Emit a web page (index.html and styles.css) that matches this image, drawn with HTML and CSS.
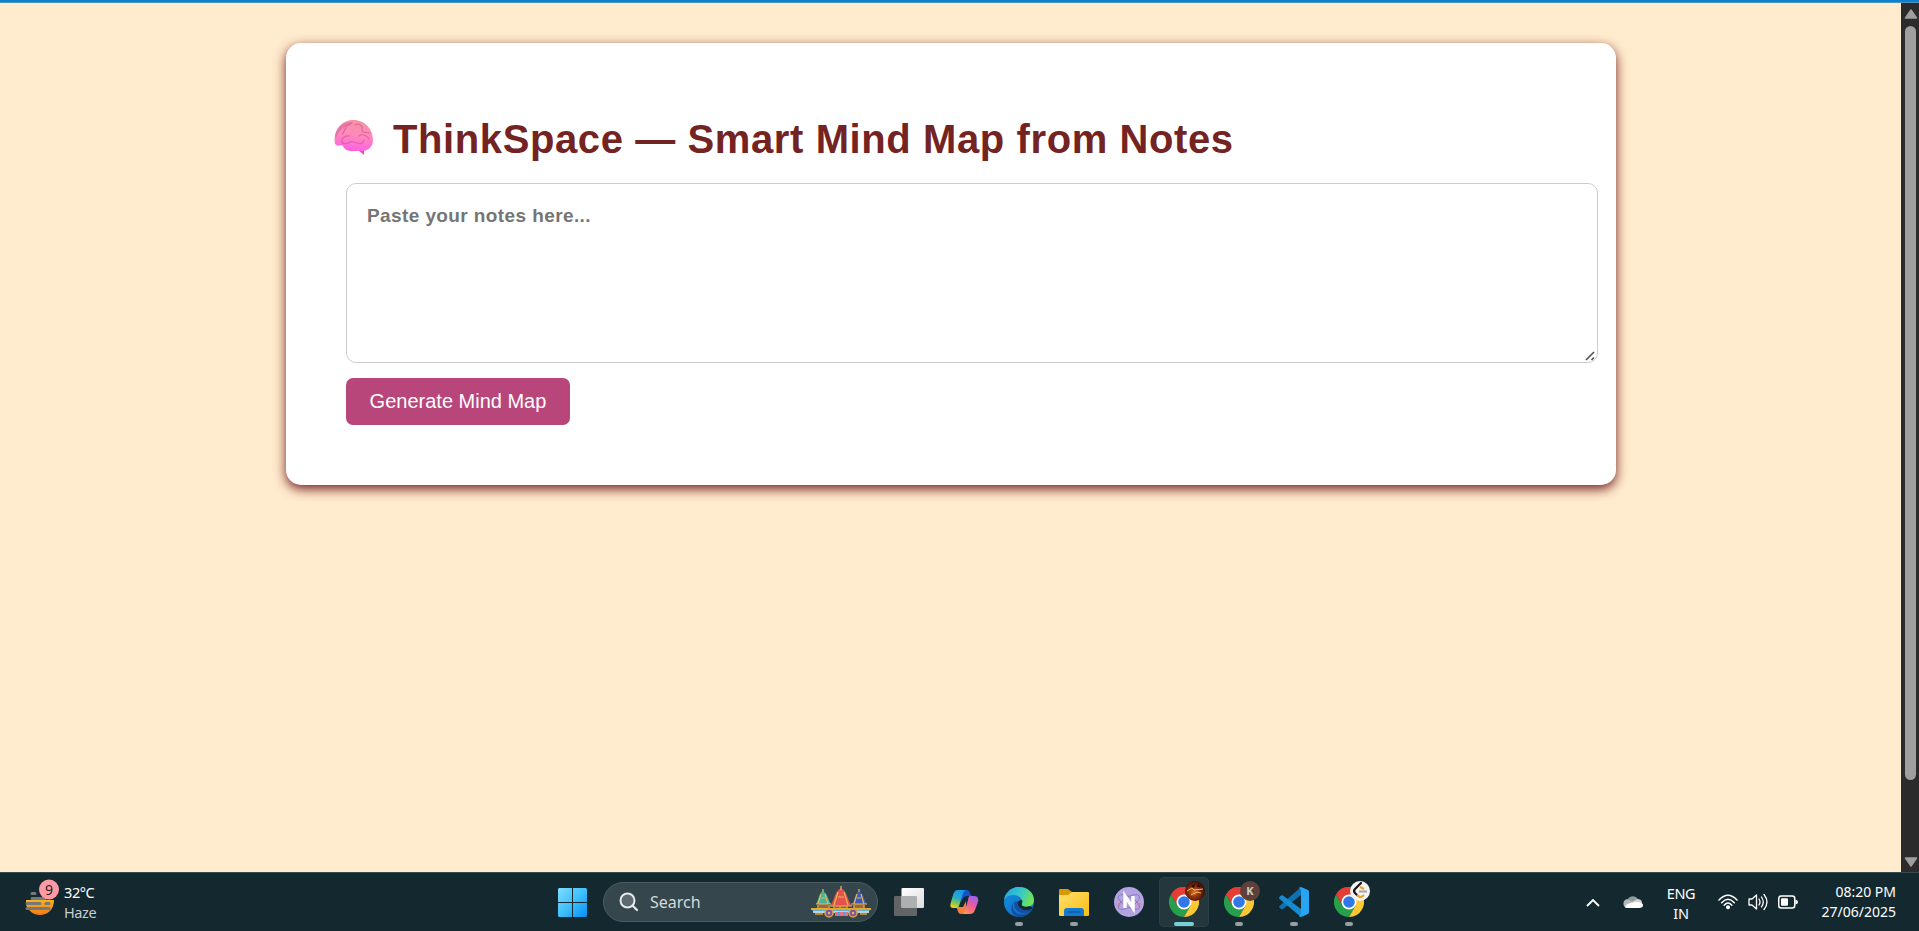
FILE: index.html
```html
<!DOCTYPE html>
<html lang="en">
<head>
<meta charset="utf-8">
<title>ThinkSpace</title>
<link rel="stylesheet" href="styles.css">
</head>
<body>
<svg width="0" height="0" class="defs" aria-hidden="true">
  <defs>
    <symbol id="chrome" viewBox="0 0 30 30">
      <path d="M15 15 2 7.500A15 15 0 0 1 28 7.500Z" fill="#e43e35"/>
      <path d="M2 7.500A15 15 0 0 0 15 30L21.500 18.700 15 15 8.500 18.700Z" fill="#27a04b"/>
      <path d="M28 7.500A15 15 0 0 1 15 30L21.500 18.700V7.500Z" fill="#fcc934"/>
      <path d="M15 7.500H28A15 15 0 0 0 2 7.500L8.500 18.700Z" fill="#e43e35"/>
      <circle cx="15" cy="15" r="7.500" fill="#fff"/><circle cx="15" cy="15" r="5.800" fill="#2f78ea"/>
    </symbol>
  </defs>
</svg>
<div class="topline"></div>
<div class="viewport">
  <main class="page">
    <section class="card">
      <h1 class="title">
        <svg class="brain" width="39" height="36" viewBox="0 0 39 36">
          <defs>
            <linearGradient id="bg" x1=".5" y1="0" x2=".35" y2="1"><stop offset="0" stop-color="#f695a0"/><stop offset=".5" stop-color="#ff88bd"/><stop offset="1" stop-color="#ff5fe5"/></linearGradient>
            <linearGradient id="bl" x1="0" y1="0" x2="1" y2="1"><stop offset="0" stop-color="#d57192"/><stop offset="1" stop-color="#f06bbb"/></linearGradient>
          </defs>
          <path d="M24 30 30 35V28Z" fill="#fb3fc6"/>
          <path d="M1 24C-1 12 6 0 19 0 32 0 39 10 39 20 39 27 34 31 28 31H17C12 31 10 28 8 25 5 26 3 26 1 24Z" fill="url(#bg)"/>
          <path d="M1 18C1 9 8 2 18 2 15 5 9 7 6 11 3 14 4 17 1 18Z" fill="url(#bl)" opacity=".8"/>
          <g fill="none" stroke="#d65aa2" stroke-width="1.200" stroke-linecap="round">
            <path d="M9 24C5 19 11 15 16 16M9 23C14 26 15 20 20 22S29 25 30 20M12 8C9 10 11 13 8 14M21 5C27 2 29 8 28 10S33 13 36 13M25 16C29 13 33 16 35 19M18 3C16 5 13 5 12 7" opacity=".75"/>
          </g>
        </svg>
        <span class="title-text">ThinkSpace — Smart Mind Map from Notes</span>
      </h1>
      <div class="notes">
        <span class="placeholder">Paste your notes here...</span>
        <svg class="grip" width="10" height="10" viewBox="0 0 10 10"><path d="M1 9 9 1M6.500 9 9 6.500" stroke="#555" stroke-width="1.700"/></svg>
      </div>
      <button class="generate">Generate Mind Map</button>
    </section>
  </main>
  <div class="scrollbar">
    <svg width="14" height="10" viewBox="0 0 14 10"><path d="M7 1 12.500 9H1.500Z" fill="#9f9f9f" stroke="#9f9f9f" stroke-width="1.500" stroke-linejoin="round"/></svg>
    <div class="thumb"></div>
    <svg class="down" width="14" height="10" viewBox="0 0 14 10"><path d="M1.500 1H12.500L7 9Z" fill="#9f9f9f" stroke="#9f9f9f" stroke-width="1.500" stroke-linejoin="round"/></svg>
  </div>
</div>
<footer class="taskbar">
  <div class="weather">
    <svg width="34" height="37" viewBox="0 0 34 37">
      <defs><linearGradient id="sun" x1="0" y1="0" x2="0" y2="1"><stop offset="0" stop-color="#f5b51f"/><stop offset="1" stop-color="#f07a18"/></linearGradient></defs>
      <path d="M1 21H29C29 31 22 36 15 36S3 31 1 26Z" fill="url(#sun)"/>
      <g stroke="#75777a" stroke-width="3" stroke-linecap="round"><path d="M7 14.500H10M7 19.500H20M2 24.500H15M21 24.500H24M2 29.500H24"/></g>
      <circle cx="24" cy="10.500" r="10" fill="#ff9aa5"/>
      <text x="24" y="15.500" text-anchor="middle" class="badge-num">9</text>
    </svg>
    <div class="stack"><span>32°C</span><span class="dim">Haze</span></div>
  </div>
  <div class="center">
    <svg class="start" width="29" height="29" viewBox="0 0 29 29">
      <defs><linearGradient id="win" gradientUnits="userSpaceOnUse" x1="0" y1="0" x2="29" y2="29"><stop offset="0" stop-color="#80dcff"/><stop offset=".5" stop-color="#3fc0fb"/><stop offset="1" stop-color="#0690f5"/></linearGradient></defs>
      <path d="M1 0H14V14H0V1ZM15 0H28L29 1V14H15ZM0 15H14V29H1L0 28ZM15 15H29V28L28 29H15Z" fill="url(#win)"/>
    </svg>
    <div class="search">
      <svg width="20" height="20" viewBox="0 0 20 20"><circle cx="8.500" cy="8.500" r="7" fill="#5b6a70" stroke="#e6e9ea" stroke-width="2"/><path d="M13.500 13.500 18 18" stroke="#e6e9ea" stroke-width="2.200" stroke-linecap="round"/></svg>
      <span class="search-label">Search</span>
      <svg class="chariots" width="62" height="32" viewBox="0 0 62 32">
        <path d="M1 22H61L58 27H4Z" fill="#62acd0"/>
        <path d="M9 17H18V23H9ZM44 17H54V23H44Z" fill="#9b6640"/><path d="M25 18H37V23H25Z" fill="#a75448"/>
        <path d="M13 5C8 8 9 14 6 18H21C18 14 18 8 13 5Z" fill="#43b39d"/>
        <path d="M49 5C44 8 45 14 42 18H57C54 14 54 8 49 5Z" fill="#3e58b5"/>
        <path d="M31 2C24 6 25 14 20 20H42C37 14 38 6 31 2Z" fill="#e6504d"/>
        <path d="M11 8 8 18M15 8 18 18M28 6 24 19M34 6 38 19M47 8 44 18M51 8 54 18M6 18H21M41 18H57M20 20H42M13 3V6M31 0V4M49 3V6M28 11H34M11 12H15M47 12H51" stroke="#e4b956" stroke-width="1.200"/>
        <path d="M1 23H61" stroke="#e2aa30" stroke-width="2"/><path d="M3 26H59" stroke="#d9e2df" stroke-width="1.500"/>
        <path d="M8 19V23M19 19V23M24 20V23M30 20V23M37 20V23M44 19V23M54 19V23M5 28H13M50 28H57" stroke="#e0a336" stroke-width="1.500"/>
        <path d="M25 26H38V30H25Z" fill="#ed6f86"/><path d="M29 26V30M34 26V30" stroke="#51a1d8" stroke-width="2"/>
        <g fill="#8053a1" stroke="#dca447" stroke-width="1.500"><circle cx="19" cy="27" r="4"/><circle cx="43" cy="27" r="4"/></g>
        <g fill="#f5bc51"><circle cx="19" cy="27" r="1.200"/><circle cx="43" cy="27" r="1.200"/></g>
      </svg>
    </div>
    <div class="apps">
      <div class="app">
        <svg width="30" height="30" viewBox="0 0 30 30"><defs><linearGradient id="tv" x1="0" y1="0" x2="1" y2="1"><stop offset="0" stop-color="#fff"/><stop offset="1" stop-color="#ddd"/></linearGradient></defs><rect x="0" y="9" width="23" height="20" rx="1" fill="#626466"/><rect x="7.500" y="1" width="22.500" height="20" rx="1" fill="url(#tv)"/><path d="M8 9H22Q23 9 23 10V21H8Z" fill="#adb0b1"/></svg>
      </div>
      <div class="app">
        <svg width="30" height="30" viewBox="0 0 30 30">
          <defs><linearGradient id="c1" x1=".6" y1="0" x2=".3" y2="1"><stop offset="0" stop-color="#1896e8"/><stop offset=".45" stop-color="#26abc8"/><stop offset=".75" stop-color="#84c656"/><stop offset="1" stop-color="#f4cf1a"/></linearGradient><linearGradient id="c2" x1=".7" y1="0" x2=".2" y2="1"><stop offset="0" stop-color="#9d60ef"/><stop offset=".5" stop-color="#f05c92"/><stop offset="1" stop-color="#ff9c51"/></linearGradient></defs>
          <path d="M13 3H18C21 3 21 8 23 9H18C14 9 13 13 12 16Z" fill="#1751cc"/>
          <path d="M7 20H14L17 14V24C16 26 14 27 12 27 8 27 9 21 7 20Z" fill="#f47e3e"/>
          <path d="M9 3H18C15 3 14 6 13 10L10 19C9 21 8 21 6 21H4C1 21 1 18 2 15L4 8C5 5 6 3 9 3Z" fill="url(#c1)"/>
          <path d="M21 9H25C29 9 30 12 29 15L26 23C25 26 23 27 20 27H12C15 27 16 24 17 20L19 13C19.500 10 20 9 21 9Z" fill="url(#c2)"/>
        </svg>
      </div>
      <div class="app open">
        <svg width="30" height="30" viewBox="0 0 30 30">
          <defs><linearGradient id="e1" x1="0" y1=".2" x2="1" y2=".5"><stop offset="0" stop-color="#25a6df"/><stop offset=".5" stop-color="#35c6cf"/><stop offset="1" stop-color="#71e352"/></linearGradient><linearGradient id="e2" x1="0" y1="0" x2="1" y2="1"><stop offset="0" stop-color="#168fdd"/><stop offset="1" stop-color="#0869c3"/></linearGradient></defs>
          <circle cx="15" cy="15" r="15" fill="url(#e2)"/>
          <path d="M9 18C8 26 17 31 27 24A15 15 0 0 1 14 30C7 28 5 20 11 14Z" fill="#124f9f"/>
          <path d="M0 13C1 5 8 0 15 0 24 0 30 6 30 13 30 18 26 20 22 20 18 20 17 18 18 16 19 11 14 8 9 8 4 8 1 11 0 13Z" fill="url(#e1)"/>
          <path d="M17 13C11 14 11 23 20 24 24 24 27 22 29 21L26 19C21 21 16 19 18 16 19 14 18 13 17 13Z" fill="#14292f"/>
          <path d="M12 14C8 18 11 25 18 26 23 27 27 24 28 22 22 25 14 22 14 16Z" fill="#144f9f"/>
        </svg>
      </div>
      <div class="app open">
        <svg width="30" height="30" viewBox="0 0 30 30"><defs><linearGradient id="fo" x1="0" y1="0" x2="1" y2="1"><stop offset="0" stop-color="#ffdf69"/><stop offset="1" stop-color="#fcbd17"/></linearGradient></defs><path d="M0 3Q0 2 1 2H9L13 5V10H0Z" fill="#dc9803"/><path d="M0 8H9L13 5H29Q30 5 30 6V28Q30 29 29 29H1Q0 29 0 28Z" fill="url(#fo)"/><path d="M5 29V24Q5 21 8 21H22Q25 21 25 24V29Z" fill="#137acf"/><path d="M9 25H21" stroke="#0d4e90" stroke-width="1.200" stroke-linecap="round"/></svg>
      </div>
      <div class="app">
        <svg width="30" height="30" viewBox="0 0 30 30"><circle cx="15" cy="15" r="15" fill="#b3a4e1"/><g fill="none" stroke="#8576bf" stroke-width=".8"><ellipse cx="15" cy="15" rx="12" ry="5" transform="rotate(30 15 15)"/><ellipse cx="15" cy="15" rx="12" ry="5" transform="rotate(-30 15 15)"/></g><path d="M11 21V9L19 21V9" fill="none" stroke="#fff" stroke-width="3.400"/><circle cx="5" cy="17.500" r="1.300" fill="#ef6c72"/><circle cx="25" cy="17.500" r="1.300" fill="#ef6c72"/></svg>
      </div>
      <div class="app open active">
        <svg width="30" height="30"><use href="#chrome"/></svg>
        <svg class="profile" width="20" height="20" viewBox="0 0 20 20"><defs><radialGradient id="fire" cx=".45" cy=".55" r=".6"><stop offset="0" stop-color="#d8742a"/><stop offset=".45" stop-color="#8e2f10"/><stop offset="1" stop-color="#280706"/></radialGradient></defs><circle cx="10" cy="10" r="10" fill="url(#fire)"/><path d="M2 10 7 7 9 9 18 8M6 14 12 11 16 12" stroke="#f4bf62" stroke-width="1" fill="none"/><path d="M6 5 10 3 9 7ZM13 3 16 6 12 6Z" fill="#260706"/></svg>
      </div>
      <div class="app open">
        <svg width="30" height="30"><use href="#chrome"/></svg>
        <svg class="profile" width="20" height="20" viewBox="0 0 20 20"><circle cx="10" cy="10" r="10" fill="#5d4138"/><text x="10" y="14" text-anchor="middle" class="profile-k">K</text></svg>
      </div>
      <div class="app open">
        <svg width="30" height="30" viewBox="0 0 30 30"><path d="M22 0V8L4 22Q3 22.500 2 22L0 20V19.500Z" fill="#0c72b5"/><path d="M0 10.500 2 8.500Q3 8 4 8.500L22 22V30L0 11.500Z" fill="#168bd1"/><path d="M22 0 29 3Q30 3.500 30 5V25Q30 26.500 29 27L22 30Q21 30 20 29L22 27V3L20 1Q21 0 22 0Z" fill="#27a5f2"/></svg>
      </div>
      <div class="app open">
        <svg width="30" height="30"><use href="#chrome"/></svg>
        <svg class="profile" width="20" height="20" viewBox="0 0 20 20"><circle cx="10" cy="10" r="10" fill="#f5f4f2"/><path d="M11 2 5 8Q3 10 5 12L7 14" fill="none" stroke="#151515" stroke-width="2.200" stroke-linecap="round"/><path d="M7 14 9 15.500Q11 17 14 14" fill="none" stroke="#f0a127" stroke-width="2.200"/><path d="M10 6 14 8" stroke="#f0a127" stroke-width="2"/><path d="M9 10.500H17" stroke="#aaa" stroke-width="2.200"/></svg>
      </div>
    </div>
  </div>
  <div class="tray">
    <svg class="chev" width="14" height="9" viewBox="0 0 14 9"><path d="M1 8 7 2 13 8" fill="none" stroke="#fff" stroke-width="1.800"/></svg>
    <svg class="cloud" width="20" height="14" viewBox="0 0 20 14"><path d="M4 7A6 6 0 0 1 15 4L13 8Z" fill="#8f989b"/><path d="M1 11Q-1 6 4 4L14 9 10 13H4Q2 13 1 11Z" fill="#b3b9bb"/><path d="M9 7 14 4Q19 4 19 8L15 10Z" fill="#cfd3d4"/><path d="M2 12Q3 9 7 8L12 7Q20 7 20 10 20 13 16 13H5Q2 13 2 12Z" fill="#fff"/></svg>
    <div class="lang"><span>ENG</span><span>IN</span></div>
    <svg class="wifi" width="20" height="16" viewBox="0 0 20 16"><g fill="none" stroke="#fff" stroke-width="1.500" stroke-linecap="round"><path d="M1 6Q10-3.500 19 6M3.700 8.700Q10 2 16.300 8.700M6.200 11.200Q10 7 13.800 11.200"/></g><circle cx="10" cy="13.300" r="2" fill="#fff"/></svg>
    <svg class="vol" width="20" height="18" viewBox="0 0 20 18"><g fill="none" stroke="#fff" stroke-width="1.300" stroke-linecap="round" stroke-linejoin="round"><path d="M1 6H4L8.500 2V16L4 12H1ZM11 6Q13 9 11 12M13.500 4Q17 9 13.500 14M16 1.500Q22 9 16 16.500"/></g></svg>
    <svg class="batt" width="20" height="14" viewBox="0 0 20 14"><rect x=".75" y="1" width="16" height="12" rx="2.500" fill="none" stroke="#fff" stroke-width="1.500"/><rect x="3" y="3.200" width="7" height="7.600" rx="1" fill="#fff"/><path d="M17.500 4.500Q20 5 20 7T17.500 9.500Z" fill="#fff"/></svg>
    <div class="clock"><span class="time">08:20 PM</span><span class="date">27/06/2025</span></div>
  </div>
</footer>
</body>
</html>
```
FILE: styles.css
```css
* { box-sizing: border-box; }
body {
  margin: 0;
  height: 931px;
  display: flex;
  flex-direction: column;
  overflow: hidden;
  background: #ffebcd;
  font-family: "Liberation Sans", Arial, sans-serif;
}
svg { display: block; flex: none; }
.defs { position: absolute; }
.topline { height: 3px; background: linear-gradient(#0f7fcb 2px, #4a95c4 2px); flex: none; }
.viewport { flex: 1; display: flex; min-height: 0; }
.page { flex: 1; padding: 40px 285px 0 286px; }
.card {
  height: 442px;
  padding: 72px 18px 60px 48px;
  border-radius: 15px;
  background: #fff;
  box-shadow: 0 4px 12px #742122;
}
.title {
  margin: 0;
  height: 48px;
  display: flex;
  align-items: center;
  gap: 20px;
  color: #742323;
  font-size: 40px;
  line-height: 48px;
  white-space: nowrap;
}
.brain { margin-top: -2px; }
.title-text { letter-spacing: 0.6px; }
.notes {
  position: relative;
  height: 180px;
  margin: 20px 0 15px 12px;
  padding: 20px;
  border: 1px solid #ccc;
  border-radius: 10px;
}
.placeholder {
  display: block;
  color: #757575;
  font-size: 19px;
  font-weight: bold;
  line-height: 24px;
  letter-spacing: 0.4px;
}
.grip { position: absolute; right: 2px; bottom: 1px; }
.generate {
  width: 224px;
  height: 47px;
  margin-left: 12px;
  padding: 0;
  border: 0;
  border-radius: 7px;
  background: #b9467b;
  color: #fff;
  font: 20px/47px "Liberation Sans", Arial, sans-serif;
  display: block;
}
.scrollbar {
  width: 18px;
  background: #2b2b2b;
  display: flex;
  flex-direction: column;
  align-items: center;
  padding: 6px 0 5px 1px;
}
.thumb { width: 11px; height: 754px; margin-top: 7px; border-radius: 6px; background: #9f9f9f; }
.down { margin-top: auto; }

.taskbar {
  height: 59px;
  flex: none;
  display: grid;
  grid-template-columns: 558px 816px 1fr;
  background: #14292f;
  border-top: 1px solid #394a4d;
  color: #fff;
  font-family: "Noto Sans", sans-serif;
  font-size: 14px;
}
.weather { display: flex; align-items: flex-start; padding: 6px 0 0 25px; gap: 5px; }
.stack, .lang, .clock { display: flex; flex-direction: column; line-height: 20px; }
.stack { padding-top: 3px; font-size: 14.500px; letter-spacing: -0.4px; }
.dim { color: #c7cdcf; }
.badge-num { font: 14px "Noto Sans", sans-serif; fill: #222; }
.center { display: flex; align-items: flex-start; }
.start { margin: 15px 16px 0 0; }
.search {
  width: 275px;
  height: 40px;
  margin: 9px 6px 0 0;
  padding: 0 5px 0 15px;
  display: flex;
  align-items: center;
  border: 1px solid #4b5c61;
  border-radius: 20px;
  background: #35474d;
  font-size: 16px;
}
.search-label { margin-left: 11px; color: #d4d9db; }
.chariots { margin-left: auto; }
.apps { display: flex; gap: 5px; padding-top: 4px; }
.app {
  position: relative;
  width: 50px;
  height: 50px;
  padding: 10px;
  border-radius: 5px;
}
.active { background: #23373c; box-shadow: inset 0 0 0 1px #2c3f44; }
.open::after {
  content: "";
  position: absolute;
  left: 21px;
  bottom: 1px;
  width: 8px;
  height: 4px;
  border-radius: 2px;
  background: #979fa2;
}
.active::after { left: 15px; width: 20px; background: #76d1dc; }
.profile { position: absolute; left: 26px; top: 4px; }
.profile-k { font: bold 11px "Noto Sans", sans-serif; fill: #d5cdca; }
.tray { display: flex; align-items: flex-start; justify-content: flex-start; padding-left: 212px; }
.chev { margin-top: 25px; }
.cloud { margin: 22px 0 0 23px; }
.lang { width: 32px; margin: 10px 0 0 22px; text-align: center; font-size: 14.500px; letter-spacing: -0.3px; }
.wifi { margin: 21px 0 0 21px; }
.vol { margin: 20px 0 0 10px; }
.batt { margin: 22px 0 0 10px; }
.clock { width: 80px; margin: 9px 0 0 18px; align-items: flex-end; white-space: nowrap; }
.time, .date { font-size: 14px; }
```
